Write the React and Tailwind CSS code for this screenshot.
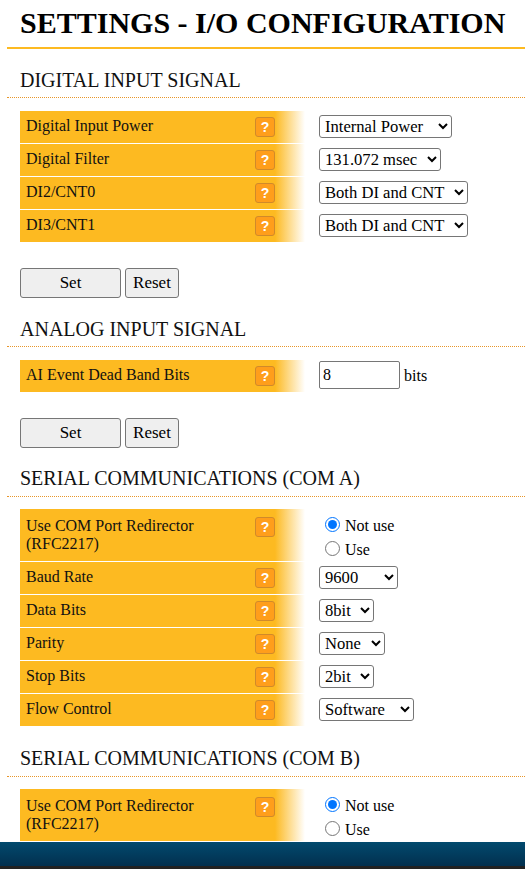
const Help = ({ tall }) => (
  <span className={`ml-auto mr-[30px] flex h-[20px] w-[20px] shrink-0 items-center justify-center rounded-[3px] border border-[#d08a2a] bg-[#ff9e1b] font-['Liberation_Sans',sans-serif] text-[14px] font-bold leading-none text-white ${tall ? "mt-[8px]" : "mt-[6px]"}`}>?</span>
);

const Row = ({ label, tall, children }) => (
  <div className={`mb-px flex items-stretch ${tall ? "h-[52px]" : "h-[32px]"}`}>
    <div className="flex w-[285px] shrink-0 items-start bg-[linear-gradient(to_right,#fdba21_0,#fdba21_255px,#ffffff_285px)] pl-[6px]">
      <span className={`w-[200px] text-[16px] leading-[18px] text-[#111] ${tall ? "mt-[8px]" : "mt-[6px]"}`}>{label}</span>
      <Help tall={tall} />
    </div>
    <div className="flex items-start pl-[14px]">{children}</div>
  </div>
);

const Select = ({ value, w }) => (
  <select
    defaultValue={value}
    style={{ width: w }}
    className="mt-[4px] h-[23px] rounded-[3px] border border-[#767676] bg-white pl-[1px] text-[16.6px] text-black"
  >
    <option>{value}</option>
  </select>
);

const Heading = ({ children, className, wide }) => (
  <div className={className}>
    <h2 className="ml-[13px] text-[20px] font-normal leading-[22px] text-[#111]">{children}</h2>
    <div className={`border-b border-dotted border-[#e8962a] ${wide ? "mt-[7px]" : "mt-[6px]"}`} />
  </div>
);

const Buttons = () => (
  <div className="ml-[13px] mt-[26px] flex gap-[4px]">
    <button className="h-[30px] w-[101px] rounded-[3px] border border-[#767676] bg-[#efefef] text-[17px] text-black">Set</button>
    <button className="h-[30px] w-[54px] rounded-[3px] border border-[#767676] bg-[#efefef] text-[17px] text-black">Reset</button>
  </div>
);

const Radios = ({ name }) => (
  <div className="ml-[6px] mt-[5px] flex flex-col gap-[2px] text-[16px] leading-[20px] text-black">
    <label className="flex items-start gap-[5px]">
      <input type="radio" name={name} defaultChecked className="mt-[3px] h-[15px] w-[15px]" />
      <span className="pt-[2px]">Not use</span>
    </label>
    <label className="flex items-start gap-[5px]">
      <input type="radio" name={name} className="mt-[3px] h-[15px] w-[15px]" />
      <span className="pt-[2px]">Use</span>
    </label>
  </div>
);

const Table = ({ children, wide }) => <div className={`ml-[13px] ${wide ? "mt-[12px]" : "mt-[13px]"}`}>{children}</div>;

export default function App() {
  return (
    <div className="flex h-[869px] w-[525px] flex-col overflow-hidden bg-white font-['Liberation_Serif',serif]">
      <main className="h-[842px] shrink-0 overflow-hidden pl-[7px]">
        <h1 className="ml-[13px] whitespace-nowrap pt-[4px] text-[30px] font-bold leading-[37px] text-black">SETTINGS - I/O CONFIGURATION</h1>
        <div className="mt-[6px] border-b-2 border-[#fdba21]" />

        <Heading className="mt-[20px]">DIGITAL INPUT SIGNAL</Heading>
        <Table>
          <Row label="Digital Input Power"><Select value="Internal Power" w={133} /></Row>
          <Row label="Digital Filter"><Select value="131.072 msec" w={122} /></Row>
          <Row label="DI2/CNT0"><Select value="Both DI and CNT" w={149} /></Row>
          <Row label="DI3/CNT1"><Select value="Both DI and CNT" w={149} /></Row>
        </Table>
        <Buttons />

        <Heading className="mt-[20px]">ANALOG INPUT SIGNAL</Heading>
        <Table>
          <Row label="AI Event Dead Band Bits">
            <div className="mt-[1px] flex items-center">
              <input defaultValue="8" className="h-[28px] w-[81px] rounded-[2px] border border-[#767676] px-[3px] text-[16px] text-black" />
              <span className="ml-[4px] pt-[2px] text-[16px] text-black">bits</span>
            </div>
          </Row>
        </Table>
        <Buttons />

        <Heading wide className="mt-[19px]">SERIAL COMMUNICATIONS (COM A)</Heading>
        <Table wide>
          <Row tall label="Use COM Port Redirector (RFC2217)"><Radios name="a" /></Row>
          <Row label="Baud Rate"><Select value="9600" w={79} /></Row>
          <Row label="Data Bits"><Select value="8bit" w={55} /></Row>
          <Row label="Parity"><Select value="None" w={66} /></Row>
          <Row label="Stop Bits"><Select value="2bit" w={55} /></Row>
          <Row label="Flow Control"><Select value="Software" w={95} /></Row>
        </Table>

        <Heading wide className="mt-[21px]">SERIAL COMMUNICATIONS (COM B)</Heading>
        <Table wide>
          <Row tall label="Use COM Port Redirector (RFC2217)"><Radios name="b" /></Row>
        </Table>
      </main>
      <footer className="h-[24px] shrink-0 bg-gradient-to-b from-[#024a6e] to-[#02304f]" />
      <div className="h-[3px] shrink-0 bg-[#222]" />
    </div>
  );
}
